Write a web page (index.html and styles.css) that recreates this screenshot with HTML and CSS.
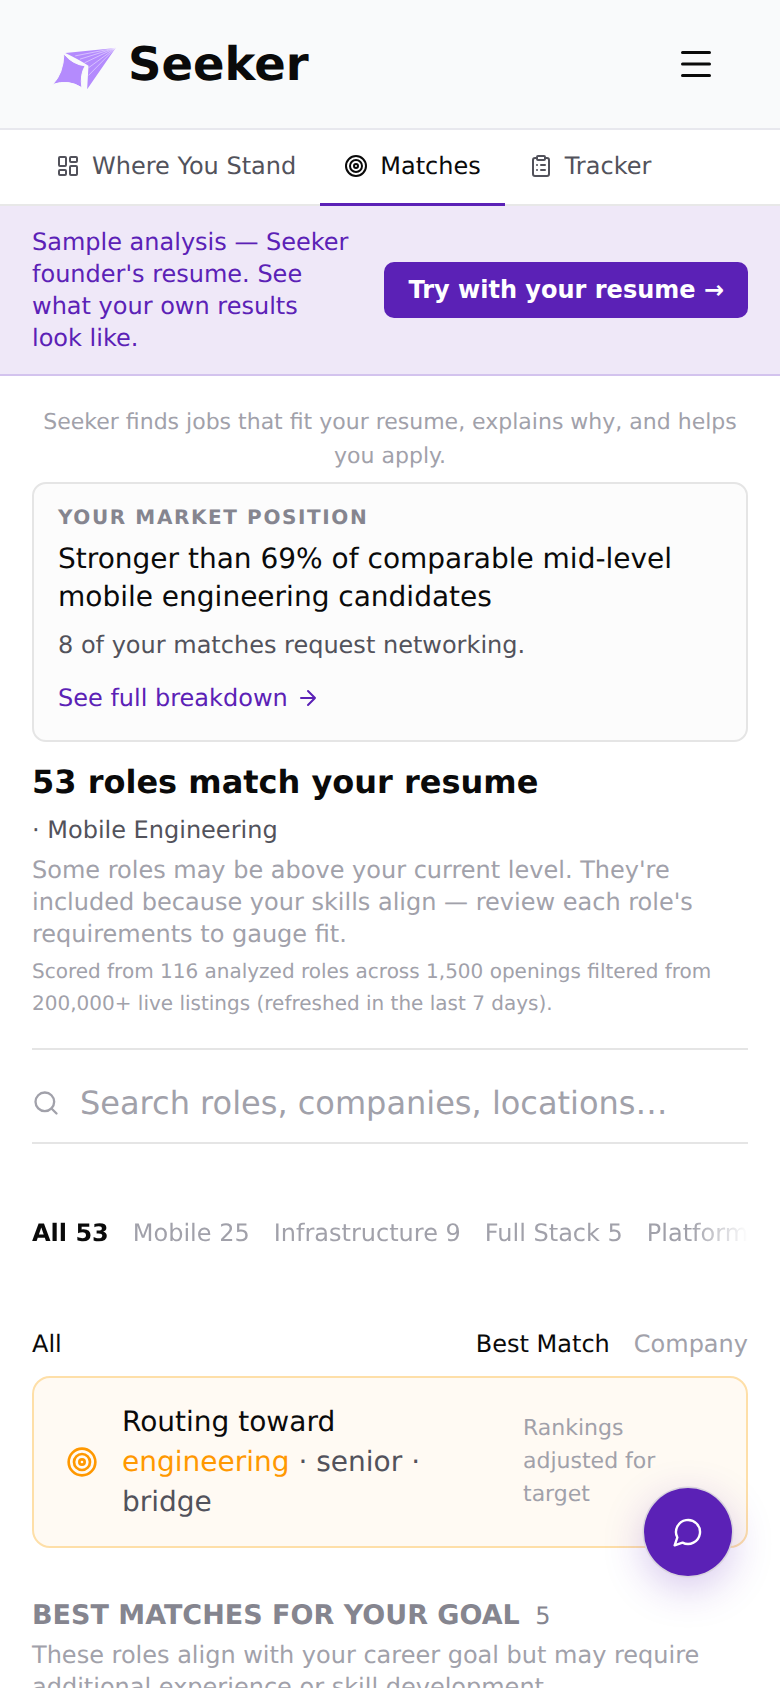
FILE: index.html
```html
<!DOCTYPE html>
<html lang="en">
<head>
    <meta charset="UTF-8">
    <title>Seeker - Matches</title>
    <link rel="stylesheet" href="styles.css">
</head>
<body>
    <div class="page">
        <header class="topbar">
            <div class="brand">
                <svg class="logo" viewBox="60 22 205 160" aria-hidden="true">
                    <path d="M106 67 L258 52 L172 177 L176 106 Q150 88 106 67 Z" fill="#b48bfd"/>
                    <g stroke="#f6f0ff" stroke-width="1.6" fill="none">
                        <path d="M258 52 L136 76"/>
                        <path d="M258 52 L150 86"/>
                        <path d="M258 52 L164 97"/>
                        <path d="M258 52 L176 112"/>
                        <path d="M258 52 L176 135"/>
                    </g>
                    <path d="M102 70 Q128 102 166 106 Q150 132 156 172 Q116 146 68 162 Q100 130 102 70 Z" fill="#b48bfd" stroke="#f9fafb" stroke-width="3"/>
                </svg>
                <span class="brand-name">Seeker</span>
            </div>
            <svg class="menu-icon" viewBox="0 0 30 30" aria-hidden="true">
                <path d="M1.5 3.5 H28.5 M1.5 15 H28.5 M1.5 26.5 H28.5"/>
            </svg>
        </header>

        <nav class="tabs">
            <div class="tab">
                <svg class="icon" viewBox="0 0 24 24"><rect x="3" y="3" width="7" height="9" rx="1"/><rect x="14" y="3" width="7" height="5" rx="1"/><rect x="14" y="12" width="7" height="9" rx="1"/><rect x="3" y="16" width="7" height="5" rx="1"/></svg>
                Where You Stand
            </div>
            <div class="tab active">
                <svg class="icon" viewBox="0 0 24 24"><circle cx="12" cy="12" r="10"/><circle cx="12" cy="12" r="6"/><circle cx="12" cy="12" r="2"/></svg>
                Matches
            </div>
            <div class="tab">
                <svg class="icon" viewBox="0 0 24 24"><rect x="8" y="2" width="8" height="4" rx="1"/><path d="M16 4h2a2 2 0 0 1 2 2v14a2 2 0 0 1-2 2H6a2 2 0 0 1-2-2V6a2 2 0 0 1 2-2h2"/><path d="M12 11h4M12 16h4M8 11h.01M8 16h.01"/></svg>
                Tracker
            </div>
        </nav>

        <div class="sample-banner">
            <p>Sample analysis — Seeker founder's resume. See what your own results look like.</p>
            <button class="try-button">Try with your resume →</button>
        </div>

        <main class="content">
            <p class="tagline">Seeker finds jobs that fit your resume, explains why, and helps you apply.</p>

            <section class="position-card">
                <div class="position-label">YOUR MARKET POSITION</div>
                <div class="position-title">Stronger than 69% of comparable mid-level mobile engineering candidates</div>
                <div class="position-note">8 of your matches request networking.</div>
                <a class="breakdown-link">
                    See full breakdown
                    <svg class="icon" viewBox="0 0 24 24"><path d="M5 12h14M12 5l7 7-7 7"/></svg>
                </a>
            </section>

            <section class="summary">
                <h2>53 roles match your resume</h2>
                <div class="summary-track">· Mobile Engineering</div>
                <p class="summary-note">Some roles may be above your current level. They're included because your skills align — review each role's requirements to gauge fit.</p>
                <p class="summary-small">Scored from 116 analyzed roles across 1,500 openings filtered from 200,000+ live listings (refreshed in the last 7 days).</p>
            </section>

            <div class="search">
                <svg class="search-icon" viewBox="0 0 24 24"><circle cx="11" cy="11" r="8"/><path d="M21 21l-4.3-4.3"/></svg>
                <span class="search-text">Search roles, companies, locations…</span>
            </div>

            <div class="chips">
                <span class="chip active">All 53</span>
                <span class="chip">Mobile 25</span>
                <span class="chip">Infrastructure 9</span>
                <span class="chip">Full Stack 5</span>
                <span class="chip">Platform 4</span>
            </div>

            <div class="sort-row">
                <span class="sort-on">All</span>
                <div class="sort-options">
                    <span class="sort-on">Best Match</span>
                    <span class="sort-off">Company</span>
                </div>
            </div>

            <section class="goal-card">
                <svg class="goal-icon" viewBox="0 0 24 24"><circle cx="12" cy="12" r="10"/><circle cx="12" cy="12" r="6"/><circle cx="12" cy="12" r="2"/></svg>
                <div class="goal-text">
                    <div class="goal-lead">Routing toward</div>
                    <div><span class="goal-accent">engineering</span> · senior · bridge</div>
                </div>
                <div class="goal-side">Rankings adjusted for target</div>
            </section>

            <section class="best-matches">
                <h3>BEST MATCHES FOR YOUR GOAL <span class="count">5</span></h3>
                <p>These roles align with your career goal but may require additional experience or skill development.</p>
            </section>
        </main>

        <button class="chat-button" aria-label="Chat">
            <svg viewBox="0 0 24 24"><path d="M7.9 20A9 9 0 1 0 4 16.1L2 22Z"/></svg>
        </button>
    </div>
</body>
</html>
```

FILE: styles.css
```css
* {
    box-sizing: border-box;
}

body {
    margin: 0;
    font-family: "DejaVu Sans", sans-serif;
    text-rendering: geometricPrecision;
    color: #0a0a0a;
    background: #fff;
}

p, h2, h3 {
    margin: 0;
}

.page {
    position: relative;
    height: 1688px;
    overflow: hidden;
}

/* top bar */
.topbar {
    height: 130px;
    padding: 0 69px 0 50px;
    display: flex;
    align-items: center;
    justify-content: space-between;
    background: #f9fafb;
    border-bottom: 2px solid #e8e8ee;
}

.brand {
    display: flex;
    align-items: center;
    gap: 10px;
}

.logo {
    width: 68px;
    height: 53px;
}

.brand-name {
    font-size: 46.5px;
    font-weight: 700;
    line-height: 56px;
}

.menu-icon {
    width: 30px;
    height: 30px;
    fill: none;
    stroke: #0a0a0a;
    stroke-width: 3;
    stroke-linecap: round;
}

/* tabs */
.tabs {
    height: 76px;
    padding: 0 32px;
    display: flex;
    gap: 0;
    border-bottom: 2px solid #e8e8e8;
}

.tab {
    height: 76px;
    padding: 0 24px 2px;
    display: flex;
    align-items: center;
    gap: 12px;
    font-size: 24px;
    color: #52525b;
    border-bottom: 3px solid transparent;
}

.tab.active {
    color: #0a0a0a;
    border-bottom-color: #5b21b6;
}

.icon {
    width: 24px;
    height: 24px;
    fill: none;
    stroke: currentColor;
    stroke-width: 2;
    stroke-linecap: round;
    stroke-linejoin: round;
}

/* sample banner */
.sample-banner {
    padding: 20px 32px;
    display: flex;
    align-items: center;
    justify-content: space-between;
    gap: 32px;
    background: #efe8f8;
    border-bottom: 2px solid #d3c3ee;
}

.sample-banner p {
    flex: 1;
    font-size: 24px;
    line-height: 32px;
    color: #5b21b6;
}

.try-button {
    flex-shrink: 0;
    height: 56px;
    padding: 0 24px;
    border: 0;
    border-radius: 10px;
    background: #5b21b6;
    color: #fff;
    font-family: inherit;
    font-size: 24px;
    font-weight: 700;
}

/* main column */
.content {
    padding: 30px 32px 0;
}

.tagline {
    font-size: 22px;
    line-height: 34px;
    text-align: center;
    color: #a1a1aa;
}

.position-card {
    margin-top: 8px;
    padding: 19px 24px 26px;
    background: #fcfcfc;
    border: 2px solid #e5e5e5;
    border-radius: 14px;
}

.position-label {
    font-size: 20px;
    line-height: 28px;
    font-weight: 700;
    letter-spacing: 0.08em;
    color: #85858f;
}

.position-title {
    margin-top: 9px;
    font-size: 28px;
    line-height: 38px;
}

.position-note {
    margin-top: 11px;
    font-size: 24px;
    line-height: 36px;
    color: #52525b;
}

.breakdown-link {
    margin-top: 19px;
    display: flex;
    align-items: center;
    gap: 8px;
    font-size: 24px;
    line-height: 32px;
    color: #5b21b6;
}

.summary {
    margin-top: 18px;
    padding-bottom: 29px;
    border-bottom: 2px solid #e5e5e5;
}

.summary h2 {
    font-size: 32px;
    line-height: 44px;
    font-weight: 700;
}

.summary-track {
    margin-top: 8px;
    font-size: 24px;
    line-height: 36px;
    color: #52525b;
}

.summary-note {
    margin-top: 6px;
    font-size: 24px;
    line-height: 32px;
    color: #a1a1aa;
}

.summary-small {
    margin-top: 5px;
    font-size: 20px;
    line-height: 32px;
    color: #a1a1aa;
}

/* search */
.search {
    height: 94px;
    padding-top: 14px;
    display: flex;
    align-items: center;
    gap: 20px;
    border-bottom: 2px solid #e5e5e5;
}

.search-icon {
    width: 28px;
    height: 28px;
    fill: none;
    stroke: #a1a1aa;
    stroke-width: 2;
    stroke-linecap: round;
}

.search-text {
    font-size: 32px;
    color: #a1a1aa;
}

/* filter chips */
.chips {
    margin-top: 73px;
    display: flex;
    gap: 24px;
    overflow: hidden;
    white-space: nowrap;
    font-size: 24px;
    line-height: 32px;
    color: #a1a1aa;
    -webkit-mask-image: linear-gradient(to right, #000 92%, transparent);
    mask-image: linear-gradient(to right, #000 92%, transparent);
}

.chip.active {
    font-weight: 700;
    color: #0a0a0a;
}

.sort-row {
    margin-top: 79px;
    display: flex;
    justify-content: space-between;
    font-size: 24px;
    line-height: 32px;
}

.sort-options {
    display: flex;
    gap: 24px;
}

.sort-on {
    color: #0a0a0a;
}

.sort-off {
    color: #a1a1aa;
}

/* routing card */
.goal-card {
    margin-top: 16px;
    height: 172px;
    padding: 0 32px;
    display: flex;
    align-items: center;
    background: #fffaf3;
    border: 2px solid #fedfa8;
    border-radius: 18px;
}

.goal-icon {
    flex-shrink: 0;
    width: 32px;
    height: 32px;
    fill: none;
    stroke: #ff9800;
    stroke-width: 2;
}

.goal-text {
    width: 340px;
    margin-left: 24px;
    font-size: 28px;
    line-height: 40px;
    color: #52525b;
}

.goal-lead {
    color: #0a0a0a;
}

.goal-accent {
    color: #ff9800;
}

.goal-side {
    width: 160px;
    margin-left: 61px;
    padding-bottom: 2px;
    font-size: 22px;
    line-height: 33px;
    color: #a1a1aa;
}

.best-matches {
    margin-top: 49px;
}

.best-matches h3 {
    font-size: 27px;
    line-height: 38px;
    font-weight: 700;
    color: #85858f;
}

.count {
    margin-left: 6px;
    font-size: 24px;
    font-weight: 400;
}

.best-matches p {
    margin-top: 4px;
    font-size: 24px;
    line-height: 32px;
    color: #a1a1aa;
}

/* floating chat button */
.chat-button {
    position: absolute;
    left: 644px;
    top: 1488px;
    width: 88px;
    height: 88px;
    display: flex;
    align-items: center;
    justify-content: center;
    border: 0;
    border-radius: 50%;
    background: #5b21b6;
    box-shadow: 0 0 0 1.5px #d9d4de, 0 12px 40px rgba(91, 33, 182, 0.25);
}

.chat-button svg {
    width: 32px;
    height: 32px;
    fill: none;
    stroke: #fff;
    stroke-width: 1.8;
    stroke-linejoin: round;
}
```
